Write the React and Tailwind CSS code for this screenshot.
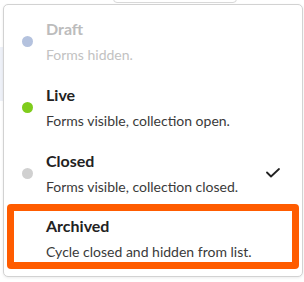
import React from 'react';

const statuses = [
  { id: 'draft', title: 'Draft', desc: 'Forms hidden.', dot: 'bg-[#b4c2de]', muted: true },
  { id: 'live', title: 'Live', desc: 'Forms visible, collection open.', dot: 'bg-[#7fcc1c]' },
  { id: 'closed', title: 'Closed', desc: 'Forms visible, collection closed.', dot: 'bg-[#d0d0d0]', checked: true },
  { id: 'archived', title: 'Archived', desc: 'Cycle closed and hidden from list.', highlight: true },
];

const Check = () => (
  <svg width="14" height="10" viewBox="0 0 14 10" fill="none">
    <path d="M1 4.5L5 8.5L13 1" stroke="#222" strokeWidth="1.8" strokeLinecap="round" strokeLinejoin="round" />
  </svg>
);

const StatusMenu = () => {
  return (
    <div className="relative w-[304px] h-[282px] bg-white overflow-hidden pl-[3px] pt-[4px]" style={{ fontFamily: 'Lato, "Open Sans", sans-serif' }}>
      {/* page behind the menu */}
      <div className="absolute left-[113px] top-[-6px] w-[124px] h-[9px] border border-[#d8d8d8] rounded-[4px]" />
      <div className="absolute left-0 top-[47px] w-[3px] h-[54px] bg-[#eef1f8]" />

      <div className="relative w-[300px] h-[273px] bg-white border border-[#d2d2d2] rounded-[5px] shadow-[0_1px_3px_rgba(0,0,0,0.08)] pt-[3px] flex flex-col">
        {statuses.map((s) => (
          <div
            key={s.id}
            className={`flex items-center ${s.highlight ? 'mx-[3px] -mt-[2px] h-[65px] rounded-[4px] shadow-[inset_0_0_0_7px_#ff5c00]' : 'h-[66px]'}`}
          >
            <div className={`${s.highlight ? 'w-[39px]' : 'w-[42px]'} flex justify-end pr-[13px]`}>
              {s.dot && <span className={`block w-[11px] h-[11px] rounded-full ${s.dot}`} />}
            </div>
            <div className={`flex-1 flex flex-col gap-[6px] ${s.highlight ? 'pt-[5px]' : 'pt-[2px]'}`}>
              <span className={`text-[16px] leading-[20px] font-bold ${s.muted ? 'text-[#bcbcbc]' : 'text-[#222]'}`}>{s.title}</span>
              <span className={`text-[14px] leading-[20px] ${s.muted ? 'text-[#c2c2c2]' : 'text-[#3a3a3a]'}`}>{s.desc}</span>
            </div>
            <div className="w-[36px] flex items-center">
              {s.checked && <Check />}
            </div>
          </div>
        ))}
      </div>
    </div>
  );
};

export default StatusMenu;
